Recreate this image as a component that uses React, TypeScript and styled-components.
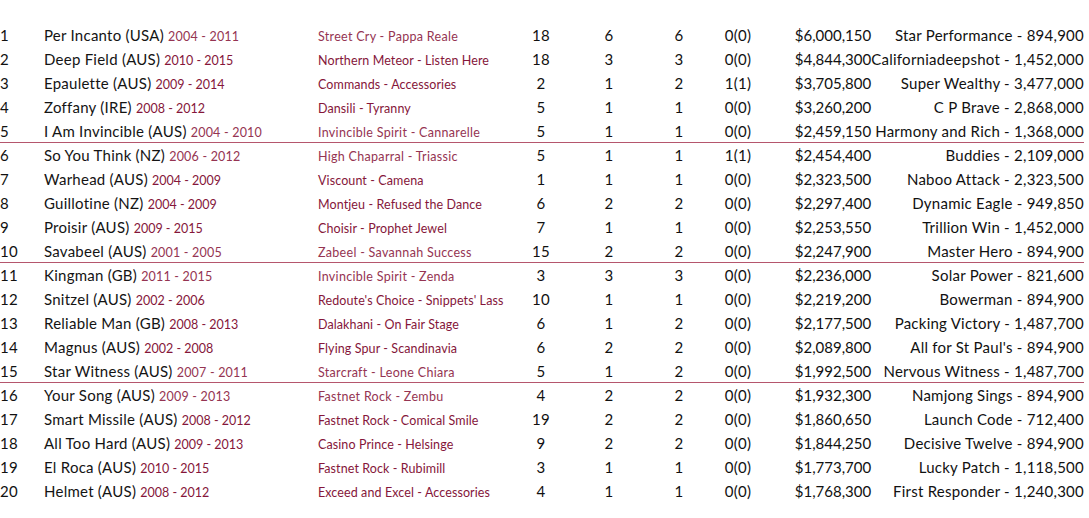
import React from "react";
import styled, { createGlobalStyle } from "styled-components";

const Global = createGlobalStyle`
  html, body { margin: 0; padding: 0; background: #ffffff; }
  body { font-family: Lato, "Open Sans", Arial, sans-serif; color: #111111; }
`;

type Row = {
  name: string;
  years: string;
  pedigree: string;
  a: string;
  b: string;
  c: string;
  d: string;
  money: string;
  best: string;
};

const rows: Row[] = [
  { name: "Per Incanto (USA)", years: "2004 - 2011", pedigree: "Street Cry - Pappa Reale", a: "18", b: "6", c: "6", d: "0(0)", money: "$6,000,150", best: "Star Performance - 894,900" },
  { name: "Deep Field (AUS)", years: "2010 - 2015", pedigree: "Northern Meteor - Listen Here", a: "18", b: "3", c: "3", d: "0(0)", money: "$4,844,300", best: "Californiadeepshot - 1,452,000" },
  { name: "Epaulette (AUS)", years: "2009 - 2014", pedigree: "Commands - Accessories", a: "2", b: "1", c: "2", d: "1(1)", money: "$3,705,800", best: "Super Wealthy - 3,477,000" },
  { name: "Zoffany (IRE)", years: "2008 - 2012", pedigree: "Dansili - Tyranny", a: "5", b: "1", c: "1", d: "0(0)", money: "$3,260,200", best: "C P Brave - 2,868,000" },
  { name: "I Am Invincible (AUS)", years: "2004 - 2010", pedigree: "Invincible Spirit - Cannarelle", a: "5", b: "1", c: "1", d: "0(0)", money: "$2,459,150", best: "Harmony and Rich - 1,368,000" },
  { name: "So You Think (NZ)", years: "2006 - 2012", pedigree: "High Chaparral - Triassic", a: "5", b: "1", c: "1", d: "1(1)", money: "$2,454,400", best: "Buddies - 2,109,000" },
  { name: "Warhead (AUS)", years: "2004 - 2009", pedigree: "Viscount - Camena", a: "1", b: "1", c: "1", d: "0(0)", money: "$2,323,500", best: "Naboo Attack - 2,323,500" },
  { name: "Guillotine (NZ)", years: "2004 - 2009", pedigree: "Montjeu - Refused the Dance", a: "6", b: "2", c: "2", d: "0(0)", money: "$2,297,400", best: "Dynamic Eagle - 949,850" },
  { name: "Proisir (AUS)", years: "2009 - 2015", pedigree: "Choisir - Prophet Jewel", a: "7", b: "1", c: "1", d: "0(0)", money: "$2,253,550", best: "Trillion Win - 1,452,000" },
  { name: "Savabeel (AUS)", years: "2001 - 2005", pedigree: "Zabeel - Savannah Success", a: "15", b: "2", c: "2", d: "0(0)", money: "$2,247,900", best: "Master Hero - 894,900" },
  { name: "Kingman (GB)", years: "2011 - 2015", pedigree: "Invincible Spirit - Zenda", a: "3", b: "3", c: "3", d: "0(0)", money: "$2,236,000", best: "Solar Power - 821,600" },
  { name: "Snitzel (AUS)", years: "2002 - 2006", pedigree: "Redoute's Choice - Snippets' Lass", a: "10", b: "1", c: "1", d: "0(0)", money: "$2,219,200", best: "Bowerman - 894,900" },
  { name: "Reliable Man (GB)", years: "2008 - 2013", pedigree: "Dalakhani - On Fair Stage", a: "6", b: "1", c: "2", d: "0(0)", money: "$2,177,500", best: "Packing Victory - 1,487,700" },
  { name: "Magnus (AUS)", years: "2002 - 2008", pedigree: "Flying Spur - Scandinavia", a: "6", b: "2", c: "2", d: "0(0)", money: "$2,089,800", best: "All for St Paul's - 894,900" },
  { name: "Star Witness (AUS)", years: "2007 - 2011", pedigree: "Starcraft - Leone Chiara", a: "5", b: "1", c: "2", d: "0(0)", money: "$1,992,500", best: "Nervous Witness - 1,487,700" },
  { name: "Your Song (AUS)", years: "2009 - 2013", pedigree: "Fastnet Rock - Zembu", a: "4", b: "2", c: "2", d: "0(0)", money: "$1,932,300", best: "Namjong Sings - 894,900" },
  { name: "Smart Missile (AUS)", years: "2008 - 2012", pedigree: "Fastnet Rock - Comical Smile", a: "19", b: "2", c: "2", d: "0(0)", money: "$1,860,650", best: "Launch Code - 712,400" },
  { name: "All Too Hard (AUS)", years: "2009 - 2013", pedigree: "Casino Prince - Helsinge", a: "9", b: "2", c: "2", d: "0(0)", money: "$1,844,250", best: "Decisive Twelve - 894,900" },
  { name: "El Roca (AUS)", years: "2010 - 2015", pedigree: "Fastnet Rock - Rubimill", a: "3", b: "1", c: "1", d: "0(0)", money: "$1,773,700", best: "Lucky Patch - 1,118,500" },
  { name: "Helmet (AUS)", years: "2008 - 2012", pedigree: "Exceed and Excel - Accessories", a: "4", b: "1", c: "1", d: "0(0)", money: "$1,768,300", best: "First Responder - 1,240,300" },
];

const lightRows = new Set([1, 5, 6, 10, 11, 15, 16]);

const Table = styled.div`
  width: 1084px;
  padding-top: 23px;
  box-sizing: border-box;
`;

const RowLine = styled.div<{ $divider: boolean }>`
  display: grid;
  grid-template-columns: 44px 274px 190px 66px 70px 70px 48px 142px 180px;
  height: 24px;
  line-height: 24px;
  box-sizing: border-box;
  align-items: baseline;
  font-size: 15px;
  letter-spacing: 0.25px;
  white-space: nowrap;
  border-bottom: 1px solid ${(p) => (p.$divider ? "#b5566d" : "transparent")};
`;

const Rank = styled.div``;

const Name = styled.div`
  color: #141414;
`;

const Years = styled.span<{ $light: boolean }>`
  font-size: 12.5px;
  letter-spacing: ${(p) => (p.$light ? "0.2px" : "0")};
  color: ${(p) => (p.$light ? "#953452" : "#85163a")};
`;

const Pedigree = styled.div<{ $light: boolean }>`
  font-size: 12.5px;
  letter-spacing: ${(p) => (p.$light ? "0.3px" : "0.1px")};
  color: ${(p) => (p.$light ? "#953452" : "#85163a")};
`;

const Num = styled.div`
  text-align: center;
`;

const Money = styled.div`
  text-align: center;
  letter-spacing: 0;
`;

const Best = styled.div`
  display: flex;
  justify-content: flex-end;
  min-width: 0;
`;

export default function App() {
  return (
    <>
      <Global />
      <Table>
        {rows.map((r, i) => {
          const n = i + 1;
          const light = lightRows.has(n);
          return (
            <RowLine key={n} $divider={n === 5 || n === 10 || n === 15}>
              <Rank>{n}</Rank>
              <Name>
                {r.name} <Years $light={light}>{r.years}</Years>
              </Name>
              <Pedigree $light={light}>{r.pedigree}</Pedigree>
              <Num>{r.a}</Num>
              <Num>{r.b}</Num>
              <Num>{r.c}</Num>
              <Num>{r.d}</Num>
              <Money>{r.money}</Money>
              <Best>
                <span>{r.best}</span>
              </Best>
            </RowLine>
          );
        })}
      </Table>
    </>
  );
}
